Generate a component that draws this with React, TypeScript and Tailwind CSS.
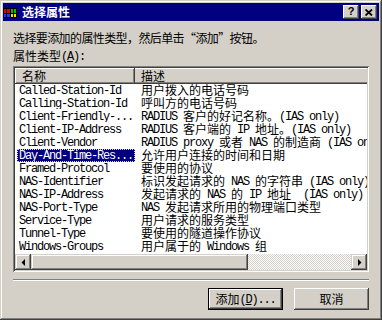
import React from "react";

const frame =
  "shadow-[inset_-1px_-1px_0_#404040,inset_1px_1px_0_#d4d0c8,inset_-2px_-2px_0_#808080,inset_2px_2px_0_#ffffff]";
const raised =
  "shadow-[inset_-1px_-1px_0_#404040,inset_1px_1px_0_#ffffff,inset_-2px_-2px_0_#808080]";
const sunken =
  "shadow-[inset_1px_1px_0_#808080,inset_-1px_-1px_0_#ffffff,inset_2px_2px_0_#404040,inset_-2px_-2px_0_#d4d0c8]";

const mono = "block shrink-0 leading-[15px] font-['Liberation_Mono',monospace] text-[12px] tracking-[-1.2px]";
const cjk = "block shrink-0 leading-[11px] font-['Noto_Sans_CJK_SC',sans-serif] text-[12px]";

function Mixed({ text }: { text: string }) {
  const parts = text.split(/([\u0000-\u00ff]+)/).filter((p) => p.length > 0);
  return (
    <>
      {parts.map((p, i) =>
        /^[\u0000-\u00ff]+$/.test(p) ? (
          <span key={i} className={mono}>
            {p}
          </span>
        ) : (
          <span key={i} className={cjk}>
            {p}
          </span>
        )
      )}
    </>
  );
}

const rows: [string, string][] = [
  ["Called-Station-Id", "用户拨入的电话号码"],
  ["Calling-Station-Id", "呼叫方的电话号码"],
  ["Client-Friendly-...", "RADIUS 客户的好记名称。(IAS only)"],
  ["Client-IP-Address", "RADIUS 客户端的 IP 地址。(IAS only)"],
  ["Client-Vendor", "RADIUS proxy 或者 NAS 的制造商 (IAS only)"],
  ["Day-And-Time-Res...", "允许用户连接的时间和日期"],
  ["Framed-Protocol", "要使用的协议"],
  ["NAS-Identifier", "标识发起请求的 NAS 的字符串 (IAS only)"],
  ["NAS-IP-Address", "发起请求的 NAS 的 IP 地址  (IAS only)"],
  ["NAS-Port-Type", "NAS 发起请求所用的物理端口类型"],
  ["Service-Type", "用户请求的服务类型"],
  ["Tunnel-Type", "要使用的隧道操作协议"],
  ["Windows-Groups", "用户属于的 Windows 组"],
];

function TitleIcon() {
  return (
    <svg width="16" height="16" viewBox="0 0 16 16">
      <rect x="1" y="4" width="14" height="10" fill="#000" />
      <rect x="2" y="5" width="2" height="4" fill="#e00000" />
      <rect x="2" y="10" width="2" height="3" fill="#1040ff" />
      <rect x="5" y="5" width="3" height="4" fill="#e00000" />
      <rect x="5" y="10" width="3" height="3" fill="#1040ff" />
      <rect x="9" y="5" width="2" height="4" fill="#00c000" />
      <rect x="9" y="10" width="2" height="3" fill="#ffe000" />
      <rect x="12" y="5" width="2" height="4" fill="#00c000" />
      <rect x="12" y="10" width="2" height="3" fill="#ffe000" />
    </svg>
  );
}

function ArrowLeft() {
  return (
    <svg width="4" height="7" viewBox="0 0 4 7">
      <polygon points="4,0 4,7 0.5,3.5" fill="#000" />
    </svg>
  );
}

function ArrowRight() {
  return (
    <svg width="4" height="7" viewBox="0 0 4 7">
      <polygon points="0,0 0,7 3.5,3.5" fill="#000" />
    </svg>
  );
}

export default function App() {
  return (
    <div
      className={`w-[382px] h-[320px] bg-[#d4d0c8] p-[3px] flex flex-col font-['Noto_Sans_CJK_SC',sans-serif] text-[12px] text-black ${frame}`}
    >
      {/* Title bar */}
      <div className="h-[18px] bg-[#000080] flex items-center pr-[2px]">
        <div className="w-[16px] h-[16px] ml-[-1px]">
          <TitleIcon />
        </div>
        <div className="ml-[4px] text-white text-[12px] font-bold leading-[18px]">选择属性</div>
        <div className="flex-1" />
        <div
          className={`w-[16px] h-[14px] bg-[#d4d0c8] flex items-center justify-center pb-[1px] ${raised}`}
        >
          <span className="font-['Liberation_Sans',sans-serif] font-bold text-[11px] leading-[11px]">?</span>
        </div>
        <div
          className={`ml-[2px] w-[16px] h-[14px] bg-[#d4d0c8] flex items-center justify-center ${raised}`}
        >
          <svg width="8" height="7" viewBox="0 0 8 7">
            <path d="M0.5 0.5 L7 6.5 M7 0.5 L0.5 6.5" stroke="#000" strokeWidth="1.8" />
          </svg>
        </div>
      </div>

      {/* Body */}
      <div className="flex flex-col px-[10px]">
        <div className="mt-[10px] h-[13px] leading-[13px] text-[12px] tracking-[-0.6px] whitespace-nowrap">
          选择要添加的属性类型，然后单击“添加”按钮。
        </div>
        <div className="mt-[6px] h-[13px] flex items-start whitespace-pre">
          <span className={cjk}>属性类型</span>
          <span className={mono}>
            (<span className="underline">A</span>):
          </span>
        </div>

        {/* List box */}
        <div className={`mt-[3px] h-[206px] p-[2px] bg-white ${sunken}`}>
          <div className="h-[202px] flex flex-col overflow-hidden">
            {/* Header */}
            <div className="h-[16px] flex shrink-0">
              <div
                className={`w-[120px] h-[16px] bg-[#d4d0c8] pl-[7px] pt-[2px] flex items-start ${raised}`}
              >
                <span className={cjk}>名称</span>
              </div>
              <div className="flex-1 h-[16px] bg-[#d4d0c8] pl-[6px] pt-[2px] flex items-start shadow-[inset_0_-1px_0_#404040,inset_0_1px_0_#ffffff,inset_0_-2px_0_#808080]">
                <span className={cjk}>描述</span>
              </div>
            </div>
            {/* Rows */}
            <div className="h-[169px] flex flex-col shrink-0">
              {rows.map(([name, desc]) => {
                const sel = name === "Day-And-Time-Res...";
                return (
                  <div key={name} className="h-[13px] flex shrink-0">
                    <div className="w-[120px] shrink-0 pl-[2px]">
                      <div
                        className={`w-[118px] h-[13px] pl-[1px] flex items-start border whitespace-pre overflow-hidden ${
                          sel
                            ? "bg-[#000080] text-white border-dotted border-[#e8e870]"
                            : "border-transparent"
                        }`}
                      >
                        <span className={`${mono} mt-[-1px]`}>{name}</span>
                      </div>
                    </div>
                    <div className="flex-1 pl-[6px] h-[13px] flex items-start whitespace-pre overflow-hidden">
                      <Mixed text={desc} />
                    </div>
                  </div>
                );
              })}
            </div>
            <div className="h-[1px] shrink-0" />
            {/* Scrollbar */}
            <div className="h-[16px] flex shrink-0">
              <div className={`w-[16px] h-[16px] bg-[#d4d0c8] flex items-center justify-center pr-[1px] ${frame}`}>
                <ArrowLeft />
              </div>
              <div className={`w-[217px] h-[16px] bg-[#d4d0c8] ${frame}`} />
              <div className="flex-1 h-[16px] bg-[image:repeating-conic-gradient(#ffffff_0%_25%,#d4d0c8_0%_50%)] bg-[length:2px_2px]" />
              <div className={`w-[16px] h-[16px] bg-[#d4d0c8] flex items-center justify-center pl-[1px] ${frame}`}>
                <ArrowRight />
              </div>
            </div>
          </div>
        </div>

        {/* Etched line */}
        <div className="mt-[7px] h-[2px] border-t border-t-[#808080] border-b border-b-white" />

        {/* Buttons */}
        <div className="mt-[7px] flex justify-end gap-[11px]">
          <div className="w-[75px] h-[22px] border border-black">
            <div
              className={`w-full h-full bg-[#d4d0c8] flex items-start justify-center pt-[4px] whitespace-pre ${raised}`}
            >
              <span className={cjk}>添加</span>
              <span className={mono}>
                (<span className="underline">D</span>)...
              </span>
            </div>
          </div>
          <div
            className={`w-[75px] h-[22px] bg-[#d4d0c8] flex items-start justify-center pt-[5px] ${raised}`}
          >
            <span className={cjk}>取消</span>
          </div>
        </div>
      </div>
    </div>
  );
}
